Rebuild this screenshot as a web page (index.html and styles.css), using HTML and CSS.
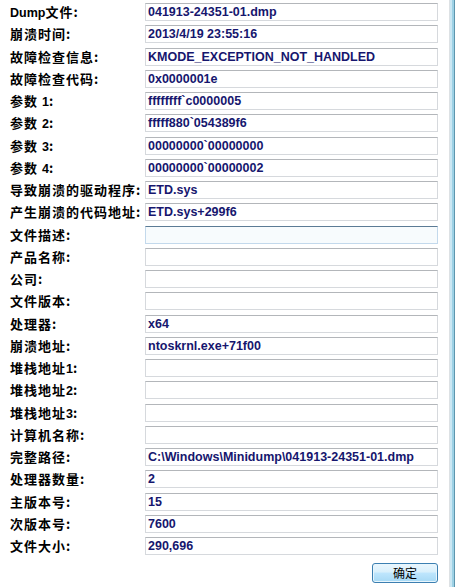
FILE: index.html
```html
<!DOCTYPE html>
<html>
<head>
<meta charset="utf-8">
<link rel="stylesheet" href="styles.css">
</head>
<body>
<div class="window">
  <div class="main">
    <div class="form">
      <div class="label"><span class="lat">Dump</span>文件:</div><div class="box">041913-24351-01.dmp</div>
      <div class="label">崩溃时间:</div><div class="box">2013/4/19 23:55:16</div>
      <div class="label">故障检查信息:</div><div class="box">KMODE_EXCEPTION_NOT_HANDLED</div>
      <div class="label">故障检查代码:</div><div class="box">0x0000001e</div>
      <div class="label">参数 <span class="lat">1</span>:</div><div class="box">ffffffff`c0000005</div>
      <div class="label">参数 <span class="lat">2</span>:</div><div class="box">fffff880`054389f6</div>
      <div class="label">参数 <span class="lat">3</span>:</div><div class="box">00000000`00000000</div>
      <div class="label">参数 <span class="lat">4</span>:</div><div class="box">00000000`00000002</div>
      <div class="label">导致崩溃的驱动程序:</div><div class="box">ETD.sys</div>
      <div class="label">产生崩溃的代码地址:</div><div class="box">ETD.sys+299f6</div>
      <div class="label">文件描述:</div><div class="box focus"></div>
      <div class="label">产品名称:</div><div class="box"></div>
      <div class="label">公司:</div><div class="box"></div>
      <div class="label">文件版本:</div><div class="box"></div>
      <div class="label">处理器:</div><div class="box">x64</div>
      <div class="label">崩溃地址:</div><div class="box">ntoskrnl.exe+71f00</div>
      <div class="label">堆栈地址<span class="lat">1</span>:</div><div class="box"></div>
      <div class="label">堆栈地址<span class="lat">2</span>:</div><div class="box"></div>
      <div class="label">堆栈地址<span class="lat">3</span>:</div><div class="box"></div>
      <div class="label">计算机名称:</div><div class="box"></div>
      <div class="label">完整路径:</div><div class="box">C:\Windows\Minidump\041913-24351-01.dmp</div>
      <div class="label">处理器数量:</div><div class="box">2</div>
      <div class="label">主版本号:</div><div class="box">15</div>
      <div class="label">次版本号:</div><div class="box">7600</div>
      <div class="label">文件大小:</div><div class="box">290,696</div>
    </div>
    <div class="actions">
      <button class="btn">确定</button>
    </div>
  </div>
  <div class="edge"></div>
</div>
</body>
</html>
```
FILE: styles.css
```css
html, body {
  margin: 0;
  padding: 0;
  background: #ffffff;
}
.window {
  display: flex;
  width: 455px;
  height: 587px;
  overflow: hidden;
}
.main {
  width: 449px;
  background: #ffffff;
}
.edge {
  width: 6px;
  background: linear-gradient(to right, #dde1e4 0, #dde1e4 1px, #cbe7f3 1px, #cbe7f3 3px, #9dd1e5 3px, #9dd1e5 5px, #5d96ae 5px);
}
.form {
  display: grid;
  grid-template-columns: 135px 293px;
  grid-auto-rows: 18px;
  row-gap: 4.25px;
  padding: 3px 0 0 10px;
  align-items: center;
}
.label {
  height: 18px;
  overflow: visible;
  font-family: "Noto Sans CJK SC", sans-serif;
  font-weight: 700;
  font-size: 13px;
  letter-spacing: 1px;
  color: #000000;
  line-height: 18px;
  white-space: nowrap;
}
.lat {
  font-family: "Liberation Sans", sans-serif;
  font-weight: 700;
  font-size: 12.5px;
  letter-spacing: 0;
  line-height: 1;
  vertical-align: baseline;
}
.box {
  box-sizing: border-box;
  height: 18px;
  border: 1px solid #d6d9dd;
  border-top-color: #b3b6ba;
  background: #ffffff;
  font-family: "Liberation Sans", sans-serif;
  font-weight: 700;
  font-size: 12.5px;
  line-height: 16px;
  color: #16166e;
  padding-left: 2px;
  white-space: nowrap;
  overflow: hidden;
}
.box.focus {
  border-color: #c3d9ec;
  border-top-color: #5b7b95;
  background: #f7fbfd;
}
.actions {
  display: flex;
  justify-content: flex-end;
  width: 438px;
  margin-top: 8px;
}
.btn {
  box-sizing: border-box;
  width: 66px;
  height: 20px;
  border: 1px solid #3c7fb1;
  border-radius: 3px;
  background: linear-gradient(to bottom, #eaf6fd 0%, #d9f0fc 45%, #bee6fd 50%, #a7d9f5 100%);
  box-shadow: inset 0 0 0 1px #e8f6fd;
  font-family: "Noto Sans CJK SC", sans-serif;
  font-size: 12px;
  color: #000000;
  padding: 0;
  line-height: 18px;
}
```
